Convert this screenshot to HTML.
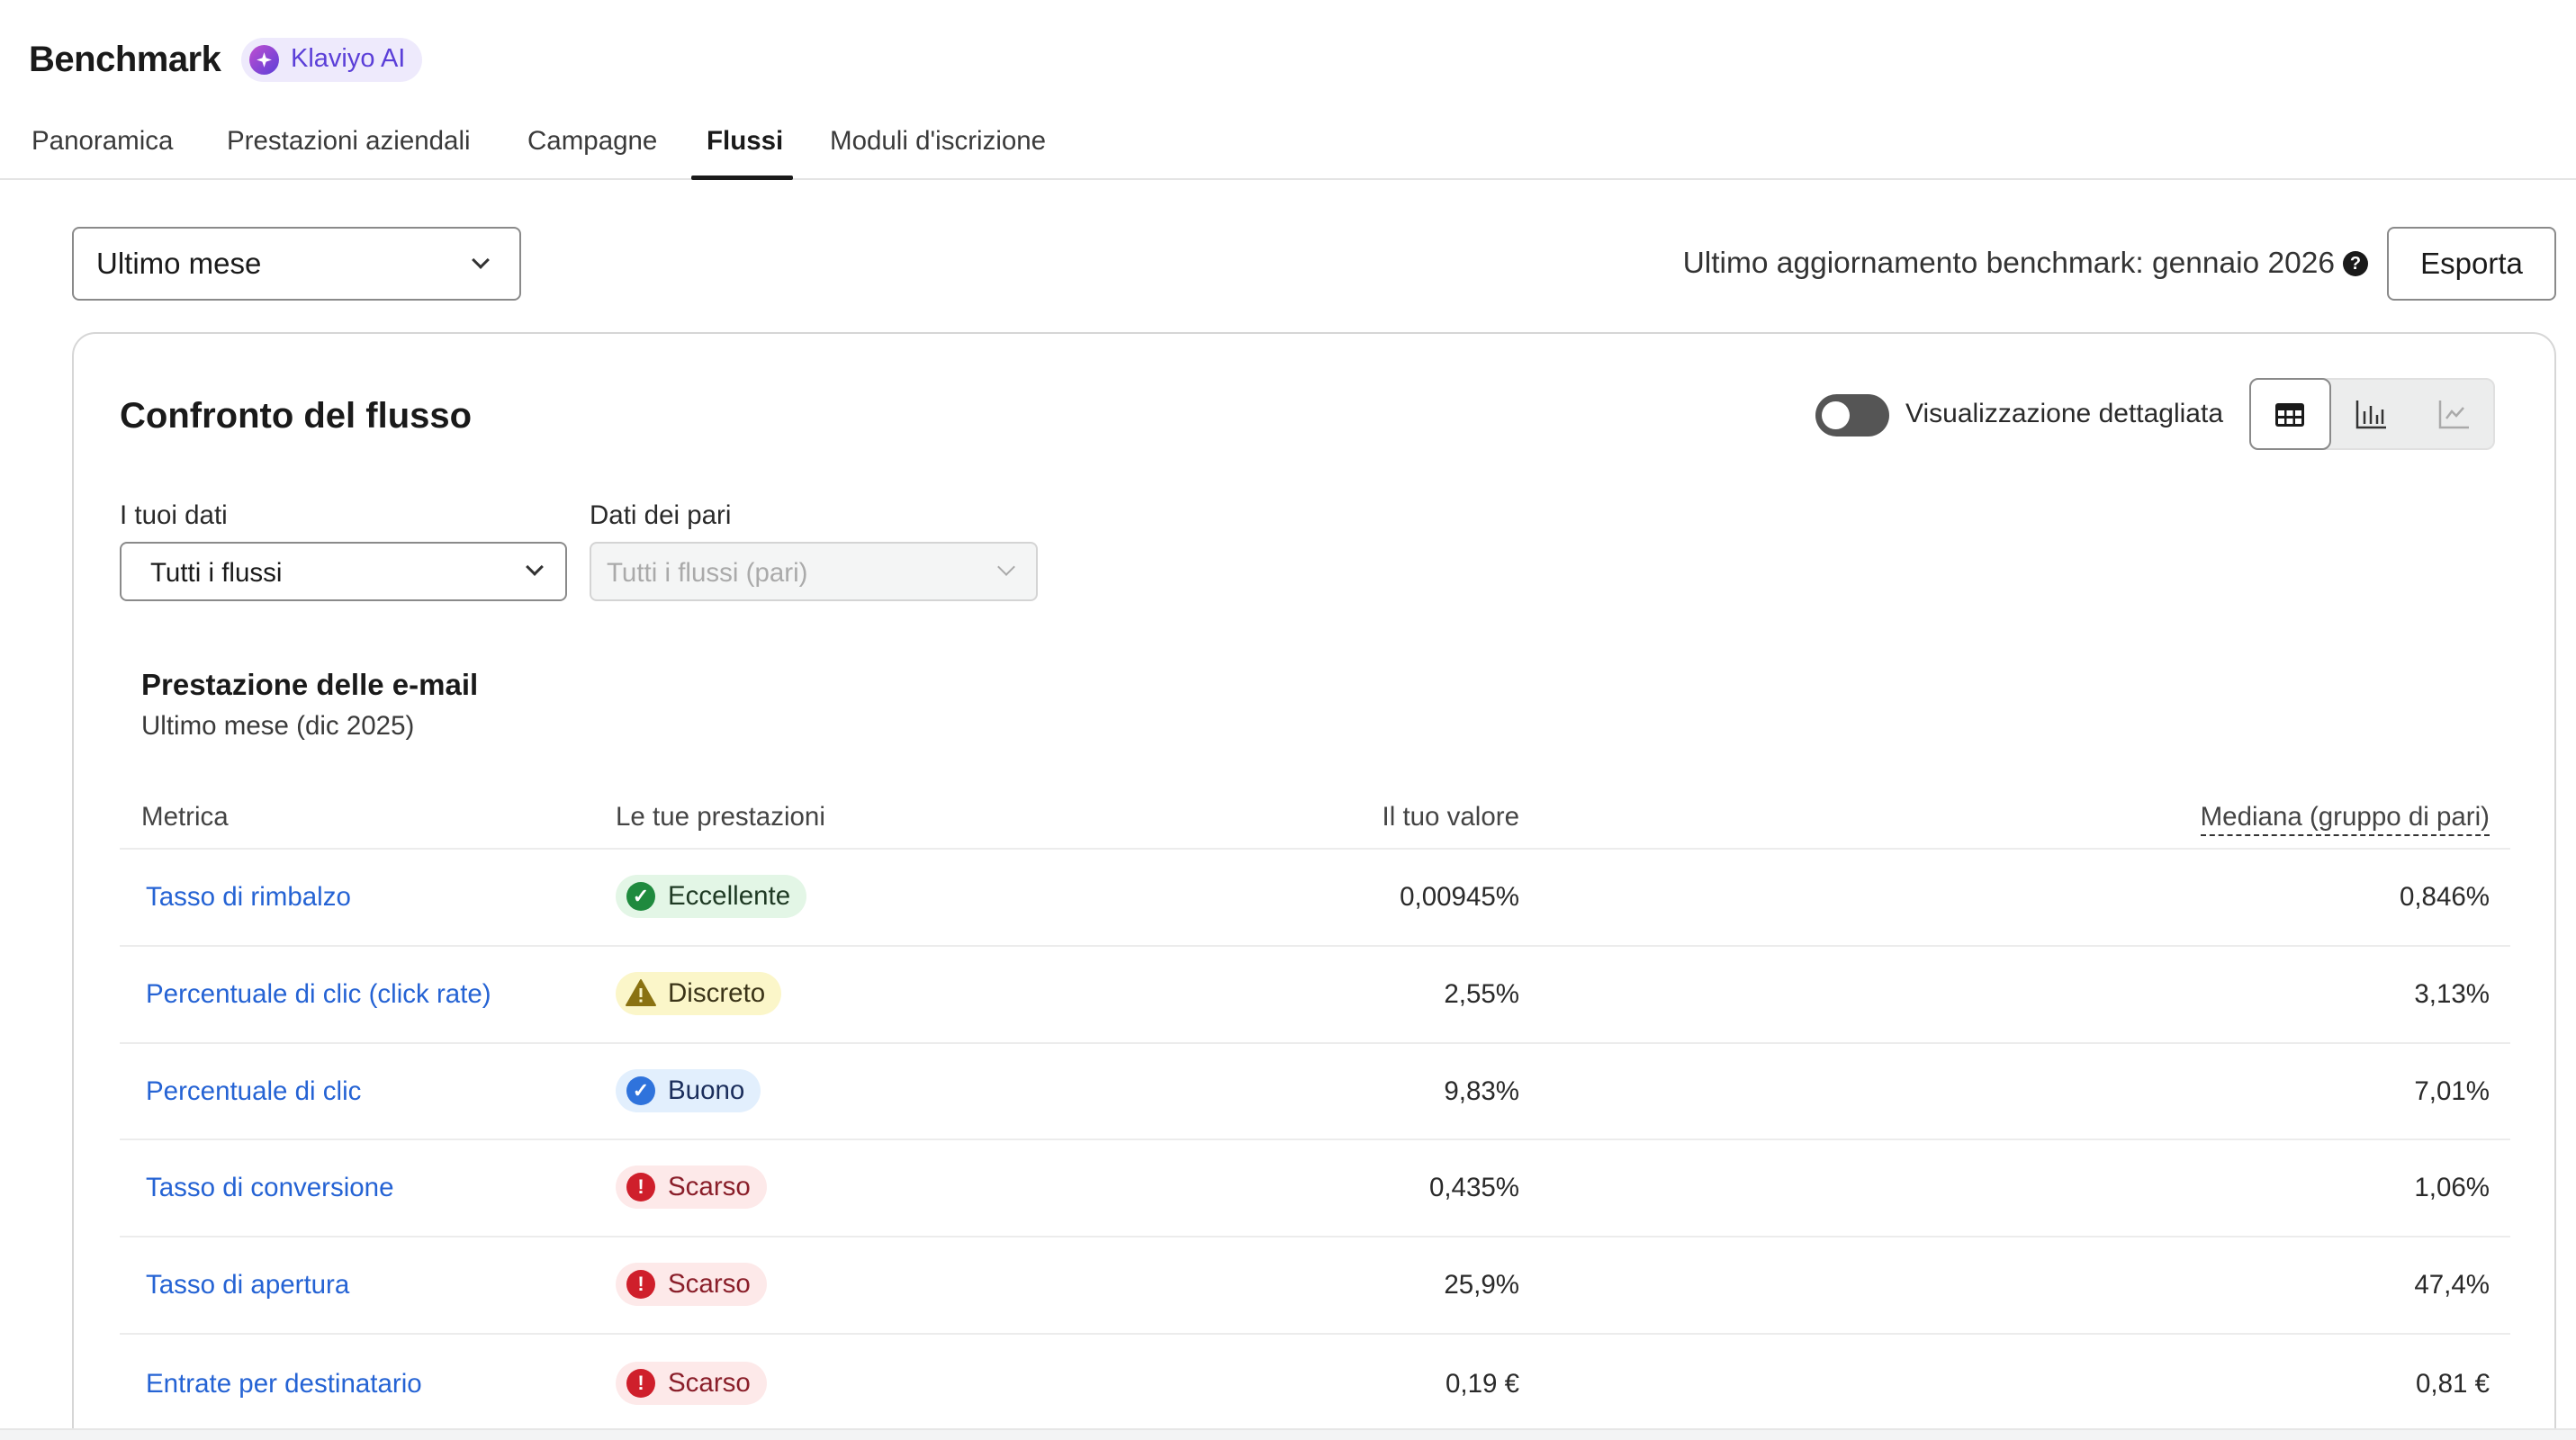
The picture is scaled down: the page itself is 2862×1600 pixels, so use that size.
<!DOCTYPE html>
<html><head><meta charset="utf-8"><style>
*{box-sizing:border-box;margin:0;padding:0}
html,body{width:2862px;height:1600px;overflow:hidden}
body{background:#fff;font-family:"Liberation Sans",Arial,sans-serif;color:#1f1f1f;position:relative}
.a{position:absolute;white-space:nowrap}
.t{font-size:29.5px;color:#3a3a3a;top:140px}
.dd{position:absolute;border:2px solid #8a8a8a;border-radius:8px;background:#fff}
.chev{position:absolute;width:14px;height:14px;border-right:3px solid #333;border-bottom:3px solid #333;transform:rotate(45deg)}
.link{color:#2563d4;font-size:29.5px;left:162px}
.badge{position:absolute;left:684px;height:48px;border-radius:24px;font-size:29.5px;line-height:48px;padding:0 18px 0 58px}
.ic{position:absolute;left:12px;top:8px;width:32px;height:32px;border-radius:50%;color:#fff;font-weight:bold;text-align:center;line-height:32px;font-size:22px}
.val{right:1174px;font-size:29.5px;color:#2a2a2a}
.med{right:96px;font-size:29.5px;color:#2a2a2a}
.sep{position:absolute;left:133px;width:2656px;height:2px;background:#ececec}
</style></head><body>
<div class="a" style="left:32px;top:44px;font-size:40px;font-weight:bold;color:#1a1a1a;letter-spacing:-0.5px">Benchmark</div>
<div class="a" style="left:268px;top:42px;width:201px;height:49px;border-radius:25px;background:#eeeafc"></div>
<div class="a" style="left:277px;top:50px;width:33px;height:33px;border-radius:50%;background:linear-gradient(135deg,#c04fd0,#5b3fd8)"></div>
<svg class="a" style="left:283px;top:56px" width="21" height="21" viewBox="0 0 20 20"><path d="M10 2 L12 8 L18 10 L12 12 L10 18 L8 12 L2 10 L8 8 Z" fill="#fff"/></svg>
<div class="a" style="left:323px;top:49px;font-size:29px;color:#5b3fd8">Klaviyo AI</div>

<div class="a t" style="left:35px">Panoramica</div>
<div class="a t" style="left:252px">Prestazioni aziendali</div>
<div class="a t" style="left:586px">Campagne</div>
<div class="a t" style="left:785px;font-weight:bold;color:#1a1a1a">Flussi</div>
<div class="a t" style="left:922px">Moduli d'iscrizione</div>
<div class="a" style="left:0;top:198px;width:2862px;height:2px;background:#e4e4e4"></div>
<div class="a" style="left:768px;top:195px;width:113px;height:5px;background:#1a1a1a;border-radius:2px"></div>

<div class="dd" style="left:80px;top:252px;width:499px;height:82px"></div>
<div class="a" style="left:107px;top:274px;font-size:33px;color:#1a1a1a">Ultimo mese</div>
<div class="chev" style="left:527px;top:282px"></div>

<div class="a" style="right:268px;top:274px;font-size:33.5px;color:#333">Ultimo aggiornamento benchmark: gennaio 2026</div>
<div class="a" style="left:2603px;top:279px;width:28px;height:28px;border-radius:50%;background:#1a1a1a;color:#fff;font-size:20px;font-weight:bold;text-align:center;line-height:28px">?</div>
<div class="dd" style="left:2652px;top:252px;width:188px;height:82px;border-color:#8a8a8a;text-align:center;line-height:78px;font-size:33px;color:#1a1a1a">Esporta</div>

<div class="a" style="left:80px;top:369px;width:2760px;height:1300px;border:2px solid #d6d6d6;border-radius:26px"></div>
<div class="a" style="left:133px;top:440px;font-size:40px;font-weight:bold;color:#1a1a1a">Confronto del flusso</div>

<div class="a" style="left:2017px;top:438px;width:82px;height:47px;border-radius:24px;background:#555"></div>
<div class="a" style="left:2024px;top:446px;width:31px;height:31px;border-radius:50%;background:#fff"></div>
<div class="a" style="left:2117px;top:443px;font-size:30px;color:#2a2a2a">Visualizzazione dettagliata</div>
<div class="a" style="left:2499px;top:420px;width:273px;height:80px;border-radius:10px;background:#eceded;border:2px solid #e0e0e0"></div>
<div class="a" style="left:2499px;top:420px;width:91px;height:80px;border-radius:10px;background:#fff;border:2px solid #8a8a8a"></div>
<svg class="a" style="left:2527px;top:447px" width="34" height="28" viewBox="0 0 34 28"><rect x="1" y="1" width="32" height="26" rx="3" fill="#1a1a1a"/><g fill="#fff"><rect x="4" y="9" width="7" height="6"/><rect x="13.5" y="9" width="7" height="6"/><rect x="23" y="9" width="7" height="6"/><rect x="4" y="18" width="7" height="6"/><rect x="13.5" y="18" width="7" height="6"/><rect x="23" y="18" width="7" height="6"/></g></svg>
<svg class="a" style="left:2617px;top:443px" width="36" height="36" viewBox="0 0 36 36" fill="none" stroke="#333" stroke-width="2.5"><path d="M2 2 V32 H34"/><path d="M10 14V28M17 8V28M24 18V28M30 12V28"/></svg>
<svg class="a" style="left:2709px;top:443px" width="36" height="36" viewBox="0 0 36 36" fill="none" stroke="#aaa" stroke-width="2.5"><path d="M2 2 V32 H34"/><path d="M9 22 L15 14 L20 19 L28 10"/></svg>

<div class="a" style="left:133px;top:556px;font-size:29.5px;color:#2a2a2a">I tuoi dati</div>
<div class="a" style="left:655px;top:556px;font-size:29.5px;color:#2a2a2a">Dati dei pari</div>
<div class="dd" style="left:133px;top:602px;width:497px;height:66px"></div>
<div class="a" style="left:167px;top:620px;font-size:29.5px;color:#1a1a1a">Tutti i flussi</div>
<div class="chev" style="left:587px;top:623px"></div>
<div class="dd" style="left:655px;top:602px;width:498px;height:66px;background:#f4f5f5;border-color:#d4d4d4"></div>
<div class="a" style="left:674px;top:620px;font-size:29.5px;color:#aaa">Tutti i flussi (pari)</div>
<div class="chev" style="left:1111px;top:623px;border-color:#aaa;border-width:2px"></div>

<div class="a" style="left:157px;top:742px;font-size:33px;font-weight:bold;color:#1a1a1a">Prestazione delle e-mail</div>
<div class="a" style="left:157px;top:790px;font-size:29.5px;color:#3a3a3a">Ultimo mese (dic 2025)</div>

<div class="a" style="left:157px;top:891px;font-size:29.5px;color:#444">Metrica</div>
<div class="a" style="left:684px;top:891px;font-size:29.5px;color:#444">Le tue prestazioni</div>
<div class="a" style="right:1174px;top:891px;font-size:29.5px;color:#444">Il tuo valore</div>
<div class="a" style="right:96px;top:891px;font-size:29.5px;color:#444;border-bottom:2px dashed #333;padding-bottom:2px">Mediana (gruppo di pari)</div>
<div class="sep" style="top:942px"></div>

<div class="a link" style="top:980px">Tasso di rimbalzo</div>
<div class="badge" style="top:972px;background:#e3f6e6;color:#1f3a24">Eccellente<div class="ic" style="background:#1f8a3e">✓</div></div>
<div class="a val" style="top:980px">0,00945%</div><div class="a med" style="top:980px">0,846%</div>
<div class="sep" style="top:1050px"></div>

<div class="a link" style="top:1088px">Percentuale di clic (click rate)</div>
<div class="badge" style="top:1080px;background:#fbf6c9;color:#3b3418">Discreto<svg style="position:absolute;left:10px;top:7px" width="36" height="32" viewBox="0 0 36 32"><path d="M18 2 L34 30 H2 Z" fill="#8a7212" stroke="#8a7212" stroke-width="2" stroke-linejoin="round"/><rect x="16.5" y="11" width="3" height="10" fill="#fbf6c9"/><rect x="16.5" y="23.5" width="3" height="3" fill="#fbf6c9"/></svg></div>
<div class="a val" style="top:1088px">2,55%</div><div class="a med" style="top:1088px">3,13%</div>
<div class="sep" style="top:1158px"></div>

<div class="a link" style="top:1196px">Percentuale di clic</div>
<div class="badge" style="top:1188px;background:#e2effd;color:#1b2e5c">Buono<div class="ic" style="background:#2f73dc">✓</div></div>
<div class="a val" style="top:1196px">9,83%</div><div class="a med" style="top:1196px">7,01%</div>
<div class="sep" style="top:1265px"></div>

<div class="a link" style="top:1303px">Tasso di conversione</div>
<div class="badge" style="top:1295px;background:#fde9e9;color:#8a1f2a">Scarso<div class="ic" style="background:#cf1f2b">!</div></div>
<div class="a val" style="top:1303px">0,435%</div><div class="a med" style="top:1303px">1,06%</div>
<div class="sep" style="top:1373px"></div>

<div class="a link" style="top:1411px">Tasso di apertura</div>
<div class="badge" style="top:1403px;background:#fde9e9;color:#8a1f2a">Scarso<div class="ic" style="background:#cf1f2b">!</div></div>
<div class="a val" style="top:1411px">25,9%</div><div class="a med" style="top:1411px">47,4%</div>
<div class="sep" style="top:1481px"></div>

<div class="a link" style="top:1521px">Entrate per destinatario</div>
<div class="badge" style="top:1513px;background:#fde9e9;color:#8a1f2a">Scarso<div class="ic" style="background:#cf1f2b">!</div></div>
<div class="a val" style="top:1521px">0,19 €</div><div class="a med" style="top:1521px">0,81 €</div>

<div class="a" style="left:0;top:1587px;width:2862px;height:13px;background:#f3f4f5;border-top:2px solid #e6e6e6;z-index:5"></div>
</body></html>
